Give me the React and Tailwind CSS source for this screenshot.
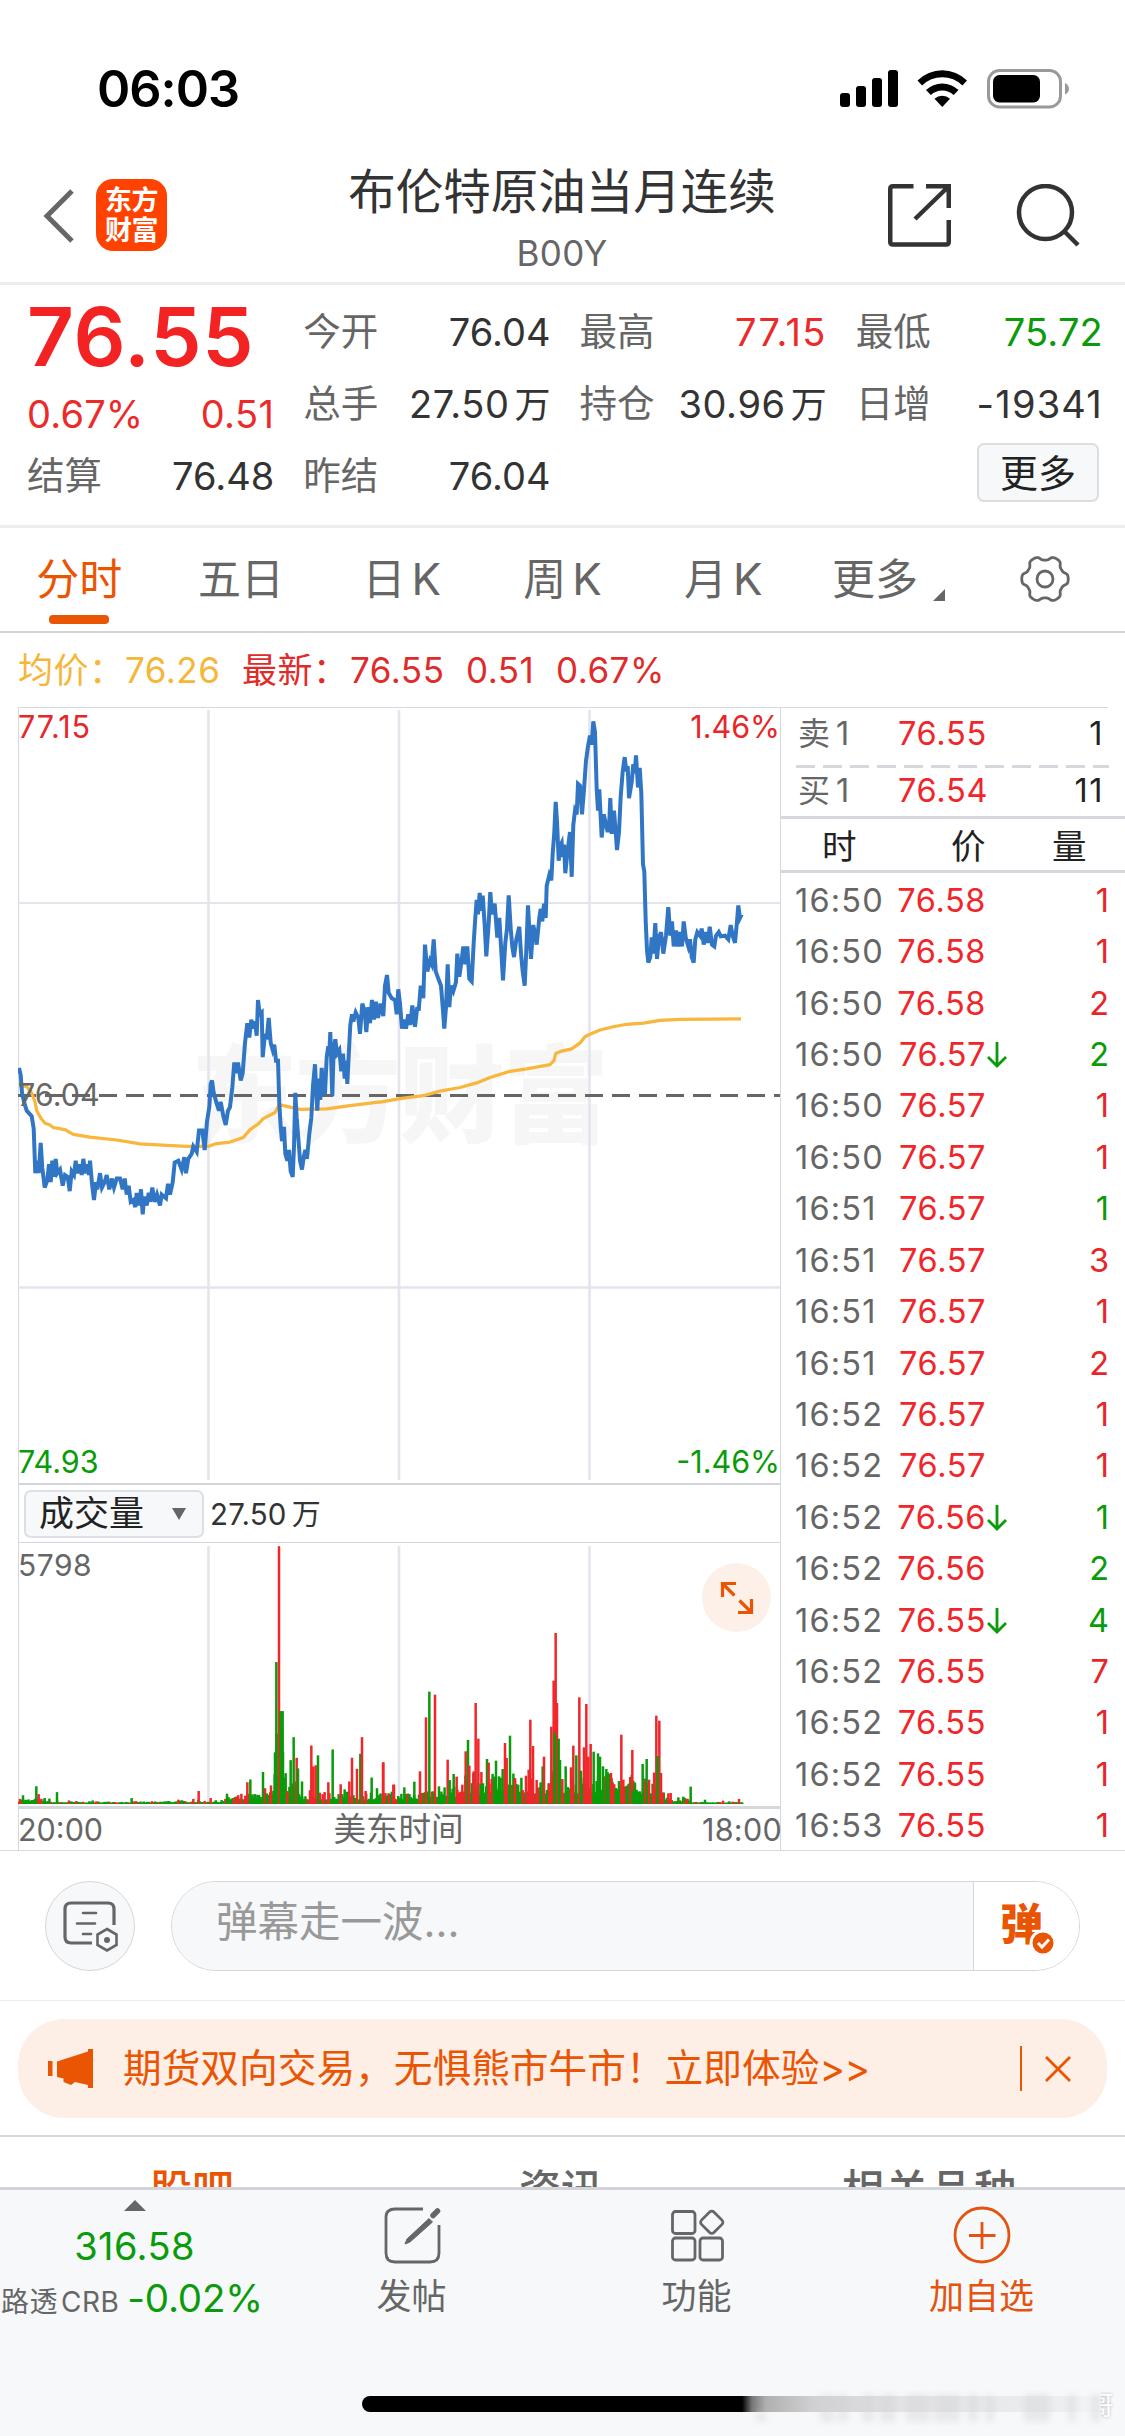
import React from "react";

/* ---------- data ---------- */

// Price samples. Each half stores x in thirds of a pixel and y at 2.8 units per pixel.
const PRICE_LEFT =
  "57,1030 62,1050 66,1100 72,1125 80,1150 95,1165 101,1200 106,1325 113,1290 116,1325 122,1240 127,1310 134,1365 142,1345 147,1300 152,1350 157,1290 162,1335 167,1285 172,1325 180,1315 188,1360 195,1330 203,1335 209,1375 215,1320 222,1330 227,1290 232,1325 240,1300 245,1330 250,1285 256,1325 262,1300 267,1330 270,1290 276,1355 282,1400 288,1350 292,1370 300,1325 306,1365 314,1350 320,1330 328,1370 336,1340 342,1365 350,1340 360,1340 368,1370 374,1340 380,1385 386,1360 392,1405 400,1400 406,1420 410,1380 418,1415 423,1370 428,1440 433,1390 440,1415 446,1380 451,1405 457,1365 464,1405 471,1385 480,1415 485,1385 498,1395 504,1355 510,1385 518,1350 524,1295 535,1290 545,1315 553,1280 558,1325 565,1285 575,1270 580,1250 590,1265 597,1205 607,1205 614,1260 621,1180 628,1140 632,1075 636,1065 641,1100 650,1130 657,1150 662,1125 670,1165 677,1190 684,1150 690,1140 697,1085 703,1015 708,1045 714,1015 722,1065 728,1045 735,960 742,905 748,945 754,895 760,920 765,900 770,940 774,840 779,880 785,875 788,1000 795,935 800,950 806,890 812,960 818,980 823,965 828,1010 834,1010 838,1130 842,1195 846,1235 852,1195 856,1270 862,1290 867,1260 872,1320 878,1335 882,1250 886,1100 890,1170 896,1240 900,1290 906,1315 911,1280 916,1260 921,1285 928,1215 934,1170 939,1080 945,1020 949,1100 952,1150 957,1060 961,1120 965,1030 970,1100 975,1100 980,1000 985,970 988,990 991,930 997,1110 1001,975 1006,950 1011,990 1018,980 1024,1040 1029,990 1034,1060 1038,1010 1042,1075 1047,980 1051,910 1056,880 1060,900 1067,875 1075,890 1080,935 1087,850 1094,870 1099,930 1105,860 1110,905 1116,840 1122,895 1128,845 1134,890";
const PRICE_RIGHT =
  "0,850 8,850 14,885 18,800 22,775 28,825 38,835 45,840 49,875 53,810 60,850 66,920 73,895 78,920 85,880 91,910 97,855 105,915 112,860 116,870 122,800 130,835 135,685 142,760 150,730 155,740 161,670 167,760 175,780 183,800 188,860 193,920 198,860 203,740 208,860 213,800 220,815 228,790 232,710 238,775 244,735 250,690 256,740 262,690 268,780 275,788 281,680 286,610 290,560 294,600 299,540 303,590 308,548 314,630 319,718 326,625 331,538 336,600 344,570 352,665 358,610 363,690 369,785 376,680 381,640 386,547 392,640 397,690 402,720 409,670 418,635 423,710 428,760 434,800 439,700 444,575 448,640 453,725 460,630 466,660 470,685 478,610 482,585 487,620 492,570 497,610 500,520 508,490 514,505 518,430 523,370 527,285 531,340 536,450 540,410 545,400 548,440 552,405 556,485 563,420 570,370 575,495 580,350 585,310 590,320 594,235 600,240 606,320 612,250 618,170 624,130 630,100 635,125 640,60 645,90 650,250 654,310 658,250 665,385 671,320 677,345 683,370 688,340 691,275 695,375 702,310 707,370 711,420 717,370 722,270 728,200 734,160 739,200 743,185 747,275 755,230 760,180 764,205 768,155 774,245 779,190 784,260 789,460 793,480 797,620 801,700 805,735 811,720 815,665 820,710 826,625 831,725 837,665 843,650 850,710 858,660 865,580 871,660 876,620 881,690 888,645 894,690 900,650 906,690 911,620 917,665 925,690 930,670 935,720 941,735 946,670 952,650 960,660 965,640 971,685 977,650 983,680 989,635 996,685 1003,690 1008,660 1016,650 1022,662 1035,660 1045,670 1052,630 1058,660 1065,680 1071,620 1075,575 1080,610 1085,600";
const AVG_LEFT =
  "57,1080 80,1082 95,1100 105,1125 110,1150 122,1170 135,1185 150,1190 160,1197 195,1203 220,1216 270,1224 350,1232 420,1243 500,1247 560,1250 625,1250 645,1243 690,1238 730,1225 750,1203 775,1187 790,1172 825,1155 838,1133 870,1140 900,1146 980,1145 1050,1136 1134,1126";
const AVG_RIGHT =
  "0,1126 60,1116 130,1108 180,1095 240,1085 290,1072 330,1057 390,1040 440,1033 510,1021 522,1010 527,990 545,983 575,977 600,960 615,943 630,936 660,924 700,915 740,908 790,905 840,897 900,894 1083,893";
const WIGGLE_JOIN = "1142,850 1150,885 1155,800 1161,770 1166,820 1175,835 1185,840 1190,880 1195,810";

const decode = (s, x0) =>
  s.split(" ").map((p) => {
    const [x, y] = p.split(",").map(Number);
    return [x0 + x / 3 - 18, y / 2.8 - 7];
  });
const join = (pts) => pts.map(([x, y]) => `${x.toFixed(1)},${y.toFixed(1)}`).join(" ");
const PRICE = join([
  ...decode(PRICE_LEFT + " " + WIGGLE_JOIN, 0),
  ...decode(PRICE_RIGHT, 380).filter(([x]) => x > 381),
]);
const AVERAGE = join([...decode(AVG_LEFT, 0), ...decode(AVG_RIGHT, 380)]);

// Volume peaks: colour, x, top.
const VOL_LEFT =
  "r60,1412 g69,1403 g80,1420 g95,1418 g109,1380 r116,1400 g134,1410 g171,1395 r207,1416 r228,1418 g278,1416 g340,1420 g366,1420 g395,1410 r415,1421 r535,1414 r580,1412 r596,1392 r632,1410 g665,1415 r700,1411 r720,1412 r736,1404 r742,1370 g751,1363 g765,1400 g789,1344 r795,1385 g800,1398 r813,1378 g824,1350 g829,1066 r837,773 g842,1190 g848,1190 g857,1347 r862,1392 g872,1314 g881,1256 r890,1308 g894,1335 g906,1368 r930,1390 r934,1277 r940,1330 r947,1327 g954,1302 r968,1400 r985,1370 g998,1287 g1016,1400 r1022,1375 g1034,1388 r1048,1368 r1056,1308 r1071,1336 g1081,1298 r1086,1256 r1097,1392 g1115,1358 g1131,1385 r1149,1320 r1167,1400 r1182,1376";
const VOL_RIGHT =
  "r10,845 r40,912 g73,920 g103,903 r120,872 r138,710 g148,633 r165,642 g177,917 r203,837 g209,898 g221,880 r230,888 r247,912 r257,812 g264,778 r268,855 r281,872 r287,667 r295,774 g302,910 g321,835 r326,846 r335,895 g342,888 g348,840 g357,887 g368,865 r375,787 r380,832 g390,765 r405,900 r428,928 r438,885 r446,867 r451,717 r459,796 r470,898 g488,857 r492,828 r508,908 r514,738 r521,600 r527,457 r531,667 g524,755 g536,774 g540,838 r547,895 g557,857 r573,860 r580,795 g589,824 r598,650 g603,870 r612,800 r619,670 r625,828 r632,790 g641,813 g654,818 g660,828 g669,857 g679,865 r695,893 g708,922 r724,762 r730,897 g740,915 r757,808 g759,930 g788,850 r795,900 g800,835 r807,897 r820,917 r829,705 r838,720 g833,826 r843,877 r848,936 r865,938 r872,937 g895,950 g910,948 r922,954 g932,918 g975,957 r1029,960 g1048,962 r1077,955";
const decodeVol = (s, x0, base, k) =>
  s.split(" ").map((p) => {
    const [x, y] = p.slice(1).split(",").map(Number);
    return { c: p[0], x: x0 + x / 3 - 18, h: (base - y) / k };
  });
const PEAKS = [...decodeVol(VOL_LEFT, 0, 1425, 2.529), ...decodeVol(VOL_RIGHT, 380, 970, 3)];

// Low per-minute volumes underneath the peaks.
const FLOOR = [];
let seed = 7;
const rnd = () => (seed = (seed * 16807) % 2147483647) / 2147483647;
for (let x = 1; x < 725; x += 1.6) {
  const X = x + 18;
  let m = 2;
  if (X < 50) m = 5;
  else if (X < 160) m = 2;
  else if (X < 225) m = 3;
  else if (X < 270) m = 10;
  else if (X < 274) m = 30;
  else if (X < 286) m = 80;
  else if (X < 300) m = 30;
  else if (X < 420) m = 12;
  else if (X < 460) m = 20;
  else if (X < 665) m = 32;
  else if (X < 690) m = 6;
  else m = 1.6;
  const r = rnd();
  FLOOR.push({ c: (X > 274 && X < 286) || rnd() < 0.82 ? "g" : "r", x, h: 0.8 + m * (0.3 + 0.7 * r * r) });
}

const TICKS = [
  ["16:50", "76.58", 0, "1", "r"],
  ["16:50", "76.58", 0, "1", "r"],
  ["16:50", "76.58", 0, "2", "r"],
  ["16:50", "76.57", 1, "2", "g"],
  ["16:50", "76.57", 0, "1", "r"],
  ["16:50", "76.57", 0, "1", "r"],
  ["16:51", "76.57", 0, "1", "g"],
  ["16:51", "76.57", 0, "3", "r"],
  ["16:51", "76.57", 0, "1", "r"],
  ["16:51", "76.57", 0, "2", "r"],
  ["16:52", "76.57", 0, "1", "r"],
  ["16:52", "76.57", 0, "1", "r"],
  ["16:52", "76.56", 1, "1", "g"],
  ["16:52", "76.56", 0, "2", "g"],
  ["16:52", "76.55", 1, "4", "g"],
  ["16:52", "76.55", 0, "7", "r"],
  ["16:52", "76.55", 0, "1", "r"],
  ["16:52", "76.55", 0, "1", "r"],
  ["16:53", "76.55", 0, "1", "r"],
];

/* ---------- status bar and title ---------- */

function StatusBar() {
  return (
    <div className="flex h-[142px] items-start justify-between pl-[97px] pr-[55px]">
      <div className="pt-[64px] text-[50.5px] font-semibold leading-[50px] tracking-[-1px] text-black">06:03</div>
      <svg className="mt-[68px] h-[42px] w-[230px]" viewBox="840 68 230 42">
        <rect x="840" y="93" width="10" height="14" rx="3" />
        <rect x="856" y="86" width="10" height="21" rx="3" />
        <rect x="872" y="78" width="10" height="29" rx="3" />
        <rect x="888" y="70" width="10" height="37" rx="3" />
        <path d="M917.5 80.5 a35 35 0 0 1 49.5 0 l-4.6 5 a28.500 28.500 0 0 0 -40.300 0z" />
        <path d="M926 90 a23.500 23.500 0 0 1 32.500 0 l-4.900 4.900 a16.500 16.500 0 0 0 -22.700 0z" />
        <path d="M934.500 98.800 a11.500 11.500 0 0 1 15.500 0 l-7.750 8.200z" />
        <rect x="988.500" y="70.500" width="72" height="36.500" rx="11" fill="none" stroke="#999" strokeWidth="3" />
        <rect x="993" y="75" width="47" height="27.500" rx="6.500" />
        <path d="M1065 83 q4 2 4 5.800 t-4 5.800z" fill="#999" />
      </svg>
    </div>
  );
}

function Header() {
  return (
    <div className="flex h-[143px] items-start border-b-[3px] border-[#ededed]">
      <svg className="ml-[42px] mt-[46px] h-[56px] w-[34px]" viewBox="0 0 34 56" fill="none" stroke="#666" strokeWidth="5">
        <path d="M30 3 L5 28 L30 53" />
      </svg>
      <div className="ml-[20px] mt-[37px] flex h-[72px] w-[71px] flex-col items-center justify-center rounded-[17px] bg-[#ff4200] pt-px text-[27px] font-bold leading-[30px] tracking-[-0.5px] text-white">
        <span>东方</span>
        <span>财富</span>
      </div>
      <div className="ml-[165px] mt-[22px] flex w-[460px] flex-col items-center">
        <div className="text-[47.500px] leading-[56px] text-[#333]">布伦特原油当月连续</div>
        <div className="mt-[12px] text-[35px] leading-[42px] tracking-[0.400px] text-[#666]">B00Y</div>
      </div>
      <svg className="ml-[96px] mt-[42px] h-[63px] w-[63px]" viewBox="0 0 63 63" fill="none" stroke="#333" strokeWidth="4.500">
        <path d="M25.500 2.250 H5 Q2.250 2.250 2.250 5 V58 Q2.250 60.500 5 60.500 H58 Q60.750 60.500 60.750 58 V36" />
        <path d="M38 2.250 H60.750 V24 M60 3 L27 35" />
      </svg>
      <svg className="ml-[65px] mt-[42px] h-[64px] w-[64px]" viewBox="0 0 64 64" fill="none" stroke="#333" strokeWidth="4.500">
        <circle cx="29.500" cy="28.500" r="26.500" />
        <path d="M48 47 L62 61" />
      </svg>
    </div>
  );
}

/* ---------- quote ---------- */

function Cell({ label, value, color = "text-[#333]" }) {
  return (
    <div className="flex h-[72px] items-center justify-between">
      <span className="text-[37.500px] text-[#666]">{label}</span>
      <span className={"flex items-baseline gap-[5px] text-[38px] " + color}>{value}</span>
    </div>
  );
}

function Wan({ n }) {
  return (
    <>
      <span className="tracking-[0.600px]">{n}</span>
      <span className="text-[36px]">万</span>
    </>
  );
}

function Quote() {
  return (
    <div className="grid h-[243px] grid-cols-4 gap-x-[29px] border-b-[3px] border-[#ededed] pl-[27px] pr-[22px] pt-[11px]">
      <div>
        <div className="flex h-[82px] items-center text-[81.500px] font-semibold tracking-[0.900px] text-[#f32323]">76.55</div>
        <div className="flex h-[62px] items-center justify-between pt-[10px] text-[38px] text-[#ec2a2a]">
          <span className="tracking-[0.200px]">0.67%</span>
          <span className="tracking-[0.400px]">0.51</span>
        </div>
        <Cell label="结算" value="76.48" />
      </div>
      <div>
        <Cell label="今开" value="76.04" />
        <Cell label="总手" value={<Wan n="27.50" />} />
        <Cell label="昨结" value="76.04" />
      </div>
      <div>
        <Cell label="最高" value="77.15" color="text-[#ec2a2a] tracking-[1.300px]" />
        <Cell label="持仓" value={<Wan n="30.96" />} />
      </div>
      <div>
        <Cell label="最低" value="75.72" color="text-[#0a9b0a] tracking-[0.200px]" />
        <Cell label="日增" value="-19341" color="text-[#333] tracking-[1.200px]" />
        <div className="flex justify-end pr-[4px] pt-[3px]">
          <div className="flex h-[59px] w-[122px] items-center justify-center rounded-[7px] border-2 border-[#dcdddf] bg-[#f6f8fa] pt-[2px] text-[38px] text-[#222]">更多</div>
        </div>
      </div>
    </div>
  );
}

function gearPath() {
  let d = "";
  for (let i = 0; i <= 120; i++) {
    const t = (i / 120) * Math.PI * 2;
    const r = 21 + 2.300 * Math.tanh(1.800 * (Math.cos(6 * t) + 0.150));
    d += (i ? "L" : "M") + (26 + r * Math.cos(t)).toFixed(2) + " " + (25 + r * Math.sin(t)).toFixed(2);
  }
  return d + "Z";
}

function PeriodTab({ name, k }) {
  return (
    <div className="flex justify-center pt-[21px]">
      <span>{name}</span>
      {k ? <span className="ml-[6px] text-[44px]">K</span> : null}
    </div>
  );
}

function Tabs() {
  return (
    <div className="grid h-[105px] grid-cols-7 border-b-2 border-[#d3d6d8] text-[43px] leading-[60px] text-[#666]">
      <div className="flex flex-col items-center pr-[2px] pt-[21px] text-[#ea5504]">
        <span>分时</span>
        <span className="mt-[6px] h-[9px] w-[60px] rounded-[4px] bg-[#ea5504]" />
      </div>
      <PeriodTab name="五日" />
      <PeriodTab name="日" k />
      <PeriodTab name="周" k />
      <PeriodTab name="月" k />
      <div className="flex items-start justify-center pl-[9px] pt-[21px]">
        <span>更多</span>
        <svg className="ml-[15px] mt-[40px] h-[12px] w-[12px]" viewBox="0 0 12 12" fill="#666">
          <path d="M12 0V12H0z" />
        </svg>
      </div>
      <div className="flex justify-center pt-[26px]">
        <svg className="h-[50px] w-[52px]" viewBox="0 0 52 50" fill="none" stroke="#666" strokeWidth="2.800" strokeLinejoin="round">
          <path d={gearPath()} />
          <circle cx="26" cy="25" r="8" />
        </svg>
      </div>
    </div>
  );
}

function Legend() {
  return (
    <div className="flex h-[74px] items-center pl-[18px] pt-px text-[35px] tracking-[0.500px] text-[#e02b2b]">
      <div className="flex w-[224px] text-[#f5b63a]">
        <span className="w-[107px]">均价：</span>
        <span>76.26</span>
      </div>
      <span className="w-[108px]">最新：</span>
      <span className="w-[116px]">76.55</span>
      <span className="w-[90px]">0.51</span>
      <span>0.67%</span>
    </div>
  );
}

/* ---------- charts ---------- */

function PriceChart() {
  return (
    <div className="relative h-[775px]">
      <svg className="absolute left-[-1px] top-[-1px] h-[776px] w-[763px]" viewBox="0 0 763 776">
        <text x="173" y="427" fontSize="106" fontWeight="900" fill="#f6f6f7" textLength="418">东方财富</text>
        <g stroke="#e3e5ed" strokeWidth="2.600">
          <path d="M190.500 3V773M381 3V773M571.500 3V773" />
          <path d="M0 196H762" strokeWidth="2" />
          <path d="M0 580.500H762" />
        </g>
        <path d="M0 388.500H762" stroke="#666" strokeWidth="3" strokeDasharray="18 9" />
        <polyline points={AVERAGE} fill="none" stroke="#f8b63c" strokeWidth="3.200" strokeLinejoin="round" />
        <polyline points={PRICE} fill="none" stroke="#3176c4" strokeWidth="4" />
      </svg>
      <div className="relative ml-[-1px] flex h-full flex-col justify-between text-[30.500px] leading-[36px]">
        <div className="flex justify-between pt-px text-[#e8262a]">
          <span className="tracking-[0.900px]">77.15</span>
          <span>1.46%</span>
        </div>
        <div className="pt-px text-[#666]">76.04</div>
        <div className="flex justify-between pb-[3px] text-[#0a9b0a]">
          <span>74.93</span>
          <span>-1.46%</span>
        </div>
      </div>
    </div>
  );
}

function Bars({ data }) {
  return data.map((b, i) => (
    <rect key={i} x={b.x - 1.250} y={261 - b.h} width="2.500" height={b.h} fill={b.c === "r" ? "#f0262a" : "#0a9b0a"} />
  ));
}

function VolumeChart() {
  return (
    <div className="relative h-[266px] border-b-[3px] border-[#d6d8db]">
      <svg className="absolute left-[-1px] top-0 h-[263px] w-[763px]" viewBox="0 0 763 263">
        <path d="M190.500 3V261M381 3V261M571.500 3V261" stroke="#e3e5ed" strokeWidth="2.600" />
        <Bars data={FLOOR} />
        <Bars data={PEAKS} />
      </svg>
      <div className="ml-[-1px] pt-[3px] text-[30px] leading-[38px] tracking-[0.500px] text-[#666]">5798</div>
      <div className="absolute left-[683px] top-[20px] flex h-[69px] w-[69px] items-center justify-center rounded-full bg-[#fdf0e8]">
        <svg className="h-[34px] w-[34px]" viewBox="0 0 34 34" fill="none" stroke="#ea5504" strokeWidth="3.200">
          <path d="M16 2.500H2.500V16M3 3L14.500 14.500M18 31.500H31.500V18M31 31L19.500 19.500" />
        </svg>
      </div>
    </div>
  );
}

function Market() {
  return (
    <div className="flex h-[1144px] border-b border-[#d9dbdd] pl-[18px]">
      <div className="w-[763px] border-x border-t border-[#d5d8e0]">
        <PriceChart />
        <div className="flex h-[60px] items-center border-b border-t-2 border-[#d3d5d9] pl-[5px]">
          <div className="flex h-[48px] w-[180px] items-center rounded-[7px] border-2 border-[#dcdfe6] bg-[#f6f8fa] pl-[13px] text-[35px] text-[#222]">
            成交量
            <svg className="ml-[28px] h-[12px] w-[14px]" viewBox="0 0 14 12" fill="#666">
              <path d="M0 0H14L7 12z" />
            </svg>
          </div>
          <span className="ml-[6px] pt-px text-[29.500px] tracking-[0.200px] text-[#333]">
            27.50<span className="ml-[5px] text-[29px]">万</span>
          </span>
        </div>
        <VolumeChart />
        <div className="ml-[-1px] flex h-[41px] items-center justify-between pt-px text-[30.500px] leading-[40px] text-[#666]">
          <span>20:00</span>
          <span className="mr-[8px] text-[32.500px]">美东时间</span>
          <span className="mr-[-2px] tracking-[0.300px]">18:00</span>
        </div>
      </div>
      <OrderBook />
    </div>
  );
}

function BookRow({ name, price, qty }) {
  return (
    <div className="flex items-center pr-[5px] text-[32.500px]">
      <span className="flex w-[102px] items-baseline pl-[2px] text-[#666]">
        <span className="text-[32px]">{name}</span>
        <span className="ml-[6px]">1</span>
      </span>
      <span className="flex-1 tracking-[0.700px] text-[#f0262a]">{price}</span>
      <span className="tracking-[1.500px] text-[#222]">{qty}</span>
    </div>
  );
}

function OrderBook() {
  return (
    <div className="flex h-[1143px] w-[344px] flex-col">
      <div className="ml-[-1px] w-[328px] border-t border-[#d5d8e0]" />
      <div className="pl-[15px] pr-[16px]">
        <div className="flex h-[57px] flex-col justify-center pb-[5px]">
          <BookRow name="卖" price="76.55" qty="1" />
        </div>
        <svg className="block h-[3px] w-[313px]" viewBox="0 0 313 3">
          <path d="M0 1.500H313" stroke="#d5d7dc" strokeWidth="3" strokeDasharray="19 8" />
        </svg>
        <div className="flex h-[48px] flex-col justify-center pb-[2px]">
          <BookRow name="买" price="76.54" qty="11" />
        </div>
      </div>
      <div className="flex h-[57px] items-center border-y-[3px] border-[#d5d7dc] pl-[41px] pt-[4px] text-[34.500px] text-[#222]">
        <span className="w-[129px]">时</span>
        <span className="w-[101px]">价</span>
        <span>量</span>
      </div>
      <div className="flex min-h-0 flex-1 flex-col text-[32.500px] leading-[40px]">
        {TICKS.map(([t, p, down, v, c], i) => (
          <div key={i} className="flex min-h-0 flex-1 items-center pl-[14px] pr-[16px] pt-[4px]">
            <span className="w-[90px] tracking-[1.200px] text-[#666]">{t}</span>
            <span className="w-[101px] text-right tracking-[0.600px] text-[#f0262a]">{p}</span>
            {down ? (
              <svg className="ml-px h-[26px] w-[20px]" viewBox="0 0 20 26" fill="none" stroke="#0a9b0a" strokeWidth="2.800">
                <path d="M10 0V24M1 15L10 24L19 15" />
              </svg>
            ) : null}
            <span className={"ml-auto " + (c === "r" ? "text-[#e8262a]" : "text-[#0a9b0a]")}>{v}</span>
          </div>
        ))}
      </div>
    </div>
  );
}

/* ---------- comment box, banner, sections ---------- */

function Danmu() {
  return (
    <div className="flex h-[150px] items-start border-b border-[#ececec] pl-[45px] pt-[30px]">
      <div className="flex h-[90px] w-[90px] items-center justify-center rounded-full border border-[#d3d6da] bg-[#f6f8fa]">
        <svg className="h-[52px] w-[56px]" viewBox="0 0 56 52" fill="none" stroke="#666" strokeWidth="3.200">
          <path d="M30 43H9Q3 43 3 37V9Q3 3 9 3H46Q52 3 52 9V25" />
          <path d="M21 13H34M15 23.500H33M21 34H29" strokeWidth="2.600" strokeLinecap="round" />
          <path d="M45 29L54.500 34.500V45L45 50.500L35.500 45V34.500Z" strokeWidth="2.600" />
          <circle cx="45" cy="40" r="3" fill="#666" stroke="none" />
        </svg>
      </div>
      <div className="ml-[36px] flex h-[90px] w-[909px] overflow-hidden rounded-full border border-[#d3d6da]">
        <div className="flex w-[801px] items-center bg-[#f6f8fa] pb-[7px] pl-[44px] text-[41.500px] text-[#999]">弹幕走一波...</div>
        <div className="relative flex-1 border-l border-[#d3d6da] bg-white">
          <div className="pl-[26px] pt-[20px] text-[43px] font-black leading-[44px] text-[#ea5504]">弹</div>
          <svg className="absolute left-[55px] top-[47px] h-[28px] w-[28px]" viewBox="0 0 28 28">
            <circle cx="14" cy="14" r="13.500" fill="#fff" />
            <circle cx="14" cy="14" r="10.500" fill="#ea5504" />
            <path d="M9 14L13 18L20 10.500" fill="none" stroke="#fff" strokeWidth="3" />
          </svg>
        </div>
      </div>
    </div>
  );
}

function Banner() {
  return (
    <div className="h-[136px] border-b-2 border-[#d6d7d9] px-[18px] pt-[18px]">
      <div className="flex h-[99px] items-center rounded-[46px] bg-[#fdeee6] text-[#ea5504]">
        <svg className="ml-[30px] h-[40px] w-[46px]" viewBox="0 0 46 40" fill="#ea5504">
          <path d="M0 12H4.500V27H0zM9 12.500L40 2.500V0H45V39H40V36L27 33L23 36L15.500 33V29.500L9 28z" />
        </svg>
        <span className="ml-[29px] text-[38.700px]">期货双向交易，无惧熊市牛市！立即体验<span className="tracking-[-0.500px]">&gt;&gt;</span></span>
        <span className="ml-auto h-[45px] w-[2px] bg-[#ea5504]" />
        <svg className="ml-[23px] mr-[36px] h-[26px] w-[26px]" viewBox="0 0 26 26" stroke="#ea5504" strokeWidth="2.800">
          <path d="M1 1L25 25M25 1L1 25" />
        </svg>
      </div>
    </div>
  );
}

function SectionTabs() {
  return (
    <div className="flex h-[50px] overflow-hidden pt-[23px] text-[42px] font-medium leading-[60px] text-[#666]">
      <span className="ml-[150px] w-[369px] text-[#ea5504]">股吧</span>
      <span className="w-[323px]">资讯</span>
      <span className="tracking-[2px]">相关品种</span>
    </div>
  );
}

/* ---------- bottom bar ---------- */

function NavItem({ label, color, children }) {
  return (
    <div className={"flex w-[285px] flex-col items-center pt-[15px] " + color}>
      <svg className="h-[60px] w-[60px]" viewBox="0 0 60 60" fill="none" stroke="currentColor" strokeWidth="2.800">
        {children}
      </svg>
      <span className="mt-[6px] text-[35px] leading-[50px]">{label}</span>
    </div>
  );
}

const SMUDGE = [
  [10, 10], [74, 14], [92, 10], [116, 12], [134, 16], [160, 24], [188, 26], [222, 10], [240, 8], [278, 26], [322, 8], [345, 10],
];

function BottomBar() {
  return (
    <div className="flex h-[249px] flex-col border-t-[3px] border-[#d3d4da] bg-[#f6f8fa]">
      <div className="flex h-[206px]">
        <div className="flex w-[269px] flex-col items-center pt-[10px]">
          <svg className="h-[11px] w-[22px]" viewBox="0 0 22 11" fill="#666">
            <path d="M0 11L11 0L22 11z" />
          </svg>
          <span className="mt-[11px] text-[38px] leading-[48px] tracking-[0.400px] text-[#0a9b0a]">316.58</span>
          <div className="mt-[4px] flex items-baseline self-start leading-[48px]">
            <span className="pl-px text-[28px] tracking-[0.500px] text-[#666]">路透<span className="ml-[3px]">CRB</span></span>
            <span className="ml-[8px] text-[38.500px] tracking-[-0.200px] text-[#0a9b0a]">-0.02%</span>
          </div>
        </div>
        <NavItem label="发帖" color="text-[#666]">
          <path d="M41 4H13Q4 4 4 12V48Q4 57 13 57H48Q57 57 57 48V20" />
          <path d="M23 39L25 34L47 13.500L50.500 17L28 37z" fill="currentColor" strokeWidth="1" />
          <path d="M51 10.500L55.500 6" strokeWidth="5.500" strokeLinecap="round" />
        </NavItem>
        <NavItem label="功能" color="text-[#666]">
          <rect x="5.500" y="6.500" width="22.500" height="22" rx="3" />
          <rect x="5.500" y="33" width="22.500" height="22" rx="3" />
          <rect x="33" y="33" width="22.500" height="22" rx="3" />
          <rect x="36" y="8.500" width="17.500" height="17.500" rx="3" transform="rotate(45 44.750 17.250)" />
        </NavItem>
        <NavItem label="加自选" color="text-[#e2540f]">
          <circle cx="30" cy="30" r="27" />
          <path d="M17 30.500H43.500M30 17V44" />
        </NavItem>
      </div>
      <div className="relative ml-[362px] h-[16px] w-[751px] rounded-l-[8px] bg-[linear-gradient(90deg,#000_0,#000_380px,#777_390px,#b0b0b0_404px,#d0d0d2_450px,#e4e4e6_540px,#eceef0_700px,#f6f8fa_751px)]">
        <svg className="absolute left-[384px] top-[-6px] h-[36px] w-[367px]" viewBox="0 0 367 36">
          <g fill="#d2d2d5" opacity="0.400" style={{ filter: "blur(3px)" }}>
            {SMUDGE.map(([x, w], i) => (
              <rect key={i} x={x} y={i === 0 ? 22 : 4} width={w} height={i === 0 ? 10 : 28} />
            ))}
          </g>
        </svg>
        <span className="absolute left-[739px] top-[-4px] flex w-[13px] justify-end overflow-hidden text-[26px] leading-[28px] text-white [text-shadow:0_0_3px_#aaa]">哥</span>
      </div>
    </div>
  );
}

export default function App() {
  return (
    <div className="flex h-[2436px] w-[1125px] flex-col overflow-hidden whitespace-nowrap bg-white font-['Inter','Noto_Sans_CJK_SC',sans-serif]">
      <StatusBar />
      <Header />
      <Quote />
      <Tabs />
      <Legend />
      <Market />
      <Danmu />
      <Banner />
      <SectionTabs />
      <BottomBar />
    </div>
  );
}
